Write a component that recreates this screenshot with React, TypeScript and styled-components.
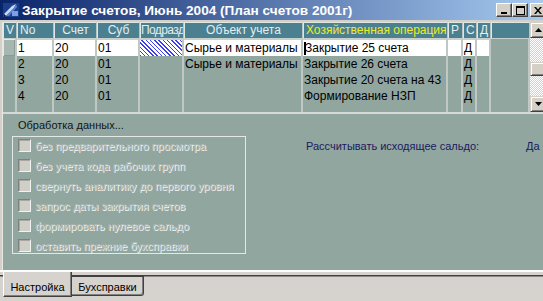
import React from "react";
import styled, { createGlobalStyle, css } from "styled-components";

const Global = createGlobalStyle`
  html, body { margin: 0; padding: 0; background: #d4d0c8; overflow: hidden; }
  body { font-family: "Liberation Sans", Arial, sans-serif; }
`;

const Window = styled.div`
  width: 543px;
  height: 301px;
  display: flex;
  flex-direction: column;
  overflow: hidden;
  background: #d4d0c8;
`;

const TitleBar = styled.div`
  height: 20px;
  flex: none;
  display: flex;
  align-items: center;
  padding-left: 3px;
  overflow: hidden;
  background: linear-gradient(90deg, #0a246a 0%, #a6caf0 100%);
`;

const Title = styled.div`
  flex: 1;
  min-width: 0;
  margin-left: 3px;
  color: #fff;
  font-weight: bold;
  font-size: 13.6px;
  white-space: nowrap;
`;

const TitleButtons = styled.div`
  flex: none;
  display: flex;
  margin-right: -3px;
`;

const TitleButton = styled.div<{ $gap?: boolean }>`
  width: 16px;
  height: 14px;
  box-sizing: border-box;
  margin-left: ${(p) => (p.$gap ? "2px" : "0")};
  background: #d4d0c8;
  border: 1px solid;
  border-color: #fff #404040 #404040 #fff;
  box-shadow: inset -1px -1px #808080;
  display: flex;
  align-items: center;
  justify-content: center;
`;

const Body = styled.div`
  flex: none;
  margin: 2px 0 0 2px;
  display: flex;
  flex-direction: column;
  overflow: hidden;
  background: #91a69f;
  border-left: 1px solid #e6e9e6;
`;

const GridArea = styled.div`
  height: 90px;
  display: flex;
  flex: none;
`;

const Table = styled.div`
  flex: none;
  width: 527px;
  display: grid;
  grid-template-columns: 14px 37px 43px 43px 44px 119px 145px 15px 14px 14px 39px;
  grid-template-rows: 17px 17px 16px 16px 16px 1fr;
  overflow: hidden;
`;

const HeadCell = styled.div<{ $align?: string; $yellow?: boolean; $narrow?: boolean }>`
  background: #4b8091;
  color: ${(p) => (p.$yellow ? "#ecec28" : "#e4eef0")};
  font-size: 12px;
  line-height: 15px;
  letter-spacing: ${(p) => (p.$narrow ? "-0.6px" : "0")};
  white-space: nowrap;
  overflow: hidden;
  text-align: ${(p) => p.$align || "left"};
  padding: 0 ${(p) => (p.$narrow ? "0" : "2px")};
  border-top: 1px solid #dfe7e5;
  border-left: 1px solid #dfe7e5;
  border-right: 1px solid #b9c3bf;
  border-bottom: 1px solid #c8d0cc;
`;

const BodyCell = styled.div<{ $kind?: string }>`
  font-size: 12px;
  line-height: 16px;
  color: #000;
  white-space: nowrap;
  overflow: hidden;
  padding-left: 1px;
  border-right: 2px solid #bfc8c4;
  display: flex;
  align-items: center;
  ${(p) =>
    p.$kind === "white" &&
    css`
      background: #fff;
      border-top: 1px solid #c8d0cc;
    `}
  ${(p) =>
    p.$kind === "v" &&
    css`
      background: #a6b6b0;
      box-shadow: inset 1px 1px #e4e9e7, inset -1px -1px #8a9a94;
    `}
  ${(p) =>
    p.$kind === "hatch" &&
    css`
      border-top: 1px solid #c8d0cc;
      background: repeating-linear-gradient(45deg, #3c3cf0 0 1px, #ffffff 1px 3px);
    `}
`;

const Caret = styled.span`
  display: inline-block;
  width: 2px;
  height: 13px;
  background: #000;
  margin-right: -1px;
`;

const ScrollBar = styled.div`
  flex: none;
  width: 16px;
  display: flex;
  flex-direction: column;
  background-color: #fff;
  background-image: conic-gradient(#d4d0c8 25%, #fff 0 50%, #d4d0c8 0 75%, #fff 0);
  background-size: 2px 2px;
`;

const ScrollBtn = styled.div`
  width: 16px;
  height: 16px;
  box-sizing: border-box;
  flex: none;
  background: #d4d0c8;
  border: 1px solid;
  border-color: #d4d0c8 #404040 #404040 #d4d0c8;
  box-shadow: inset 1px 1px #fff, inset -1px -1px #808080;
  display: flex;
  align-items: center;
  justify-content: center;
`;

const Track = styled.div<{ $h: number }>`
  height: ${(p) => p.$h}px;
  flex: none;
`;

const Thumb = styled(ScrollBtn)`
  height: 14px;
`;

const Panel = styled.div`
  height: 158px;
  box-sizing: border-box;
  border-top: 2px solid #d5dad7;
  display: flex;
  flex: none;
`;

const LeftCol = styled.div`
  flex: none;
  width: 303px;
  padding-left: 9px;
  box-sizing: border-box;
`;

const GroupTitle = styled.div`
  font-size: 11px;
  line-height: 13px;
  color: #141414;
  padding: 5px 0 0 6px;
`;

const GroupBox = styled.div`
  margin-top: 4px;
  width: 234px;
  height: 118px;
  box-sizing: border-box;
  border: 1px solid #e4e9e7;
  padding-left: 5px;
`;

const OptionRow = styled.div`
  height: 20px;
  box-sizing: border-box;
  padding-bottom: 3px;
  display: flex;
  align-items: center;
`;

const Check = styled.div`
  width: 13px;
  height: 13px;
  box-sizing: border-box;
  flex: none;
  background: #cfcfc8;
  border: 1px solid;
  border-color: #808080 #f2f2f2 #f2f2f2 #808080;
  box-shadow: inset 1px 1px #a8a8a0;
`;

const OptionLabel = styled.span`
  margin-left: 4px;
  font-size: 11px;
  color: #adb7b4;
  text-shadow: 1px 1px 0 #f2f4f2;
  white-space: nowrap;
`;

const RightCol = styled.div`
  flex: 1;
  padding-top: 26px;
  display: flex;
  align-items: flex-start;
  font-size: 11px;
  line-height: 13px;
  color: #1a1a5e;
  white-space: nowrap;
`;

const SettingName = styled.span`
  width: 220px;
  flex: none;
`;

const TabStrip = styled.div`
  flex: 1;
  display: flex;
  align-items: flex-start;
  padding-left: 3px;
  border-top: 2px solid #fdfdfd;
  background-color: #d6d2ce;
  background-image: linear-gradient(
    to bottom,
    transparent 3px,
    #404040 3px,
    #404040 4px,
    #8a8a8a 4px,
    #8a8a8a 5px,
    transparent 5px
  );
`;

const Tab = styled.div<{ $active?: boolean }>`
  font-size: 11px;
  color: #000;
  box-sizing: border-box;
  display: flex;
  justify-content: center;
  white-space: nowrap;
  ${(p) =>
    p.$active
      ? css`
          width: 69px;
          height: 25px;
          padding-top: 9px;
          background: #d6d2ce;
          border-left: 1px solid #fff;
          border-right: 1px solid #404040;
          border-bottom: 1px solid #404040;
          box-shadow: inset -1px -1px #808080;
        `
      : css`
          width: 72px;
          height: 20px;
          margin-top: 4px;
          padding-top: 4px;
          border: 1px solid #404040;
          border-left: none;
          border-radius: 0 0 3px 0;
          box-shadow: inset -1px -1px #808080;
        `}
`;

type Col = { key: string; head: string; align?: string; yellow?: boolean; narrow?: boolean };

const columns: Col[] = [
  { key: "v", head: "V" },
  { key: "no", head: "No" },
  { key: "schet", head: "Счет", align: "center" },
  { key: "sub", head: "Суб", align: "center" },
  { key: "pod", head: "Подразд", narrow: true },
  { key: "obj", head: "Объект учета", align: "center" },
  { key: "op", head: "Хозяйственная операция", align: "center", yellow: true },
  { key: "r", head: "Р" },
  { key: "c", head: "С" },
  { key: "d", head: "Д" },
  { key: "x", head: "" },
];

type Row = Record<string, string> & { sel?: boolean };

const rows: Row[] = [
  { v: "", no: "1", schet: "20", sub: "01", pod: "", obj: "Сырье и материалы", op: "Закрытие 25 счета", r: "", c: "Д", d: "", x: "", sel: true } as Row,
  { v: "", no: "2", schet: "20", sub: "01", pod: "", obj: "Сырье и материалы", op: "Закрытие 26 счета", r: "", c: "Д", d: "", x: "" } as Row,
  { v: "", no: "3", schet: "20", sub: "01", pod: "", obj: "", op: "Закрытие 20 счета на 43", r: "", c: "Д", d: "", x: "" } as Row,
  { v: "", no: "4", schet: "20", sub: "01", pod: "", obj: "", op: "Формирование НЗП", r: "", c: "Д", d: "", x: "" } as Row,
];

const options = [
  "без предварительного просмотра",
  "без учета кода рабочих групп",
  "свернуть аналитику до первого уровня",
  "запрос даты закрытия счетов",
  "формировать нулевое сальдо",
  "оставить прежние бухсправки",
];

function kindFor(key: string, sel?: boolean): string | undefined {
  if (!sel) return undefined;
  if (key === "v") return "v";
  if (key === "pod") return "hatch";
  if (key === "x") return undefined;
  return "white";
}

const AppIcon = () => (
  <svg width="16" height="16" viewBox="0 0 16 16">
    <rect x="0" y="1" width="16" height="14" fill="#1c3f8c" />
    <path d="M1 12 L9 4 L13 2 L11 6 L3 14 Z" fill="#c8d8f8" />
    <path d="M3 14 L11 6 L13 2 L14 5 L6 14 Z" fill="#5a7fd0" />
    <path d="M1 12 L3 14 L1 15 Z" fill="#0a1a50" />
    <rect x="9" y="9" width="6" height="5" fill="#7fa0e0" />
  </svg>
);

const MinGlyph = () => (
  <svg width="8" height="7" viewBox="0 0 8 7">
    <rect x="1" y="5" width="6" height="2" fill="#000" />
  </svg>
);
const MaxGlyph = () => (
  <svg width="9" height="9" viewBox="0 0 9 9">
    <rect x="0.5" y="0.5" width="8" height="8" fill="none" stroke="#000" />
    <rect x="0" y="0" width="9" height="2" fill="#000" />
  </svg>
);
const CloseGlyph = () => (
  <svg width="8" height="7" viewBox="0 0 8 7">
    <path d="M0 0 L2 0 L4 2.5 L6 0 L8 0 L5 3.5 L8 7 L6 7 L4 4.5 L2 7 L0 7 L3 3.5 Z" fill="#000" />
  </svg>
);
const Arrow = ({ up }: { up?: boolean }) => (
  <svg width="7" height="4" viewBox="0 0 7 4">
    <path d={up ? "M3.5 0 L7 4 L0 4 Z" : "M0 0 L7 0 L3.5 4 Z"} fill="#000" />
  </svg>
);

export default function App() {
  return (
    <>
      <Global />
      <Window>
        <TitleBar>
          <AppIcon />
          <Title>Закрытие счетов, Июнь 2004 (План счетов 2001г)</Title>
          <TitleButtons>
            <TitleButton>
              <MinGlyph />
            </TitleButton>
            <TitleButton>
              <MaxGlyph />
            </TitleButton>
            <TitleButton $gap>
              <CloseGlyph />
            </TitleButton>
          </TitleButtons>
        </TitleBar>
        <Body>
          <GridArea>
            <Table>
              {columns.map((c) => (
                <HeadCell key={c.key} $align={c.align} $yellow={c.yellow} $narrow={c.narrow}>
                  {c.head}
                </HeadCell>
              ))}
              {rows.map((r, i) =>
                columns.map((c) => (
                  <BodyCell key={`${i}-${c.key}`} $kind={kindFor(c.key, r.sel)}>
                    {r.sel && c.key === "op" ? <Caret /> : null}
                    {r[c.key]}
                  </BodyCell>
                ))
              )}
              {columns.map((c) => (
                <BodyCell key={`f-${c.key}`} />
              ))}
            </Table>
            <ScrollBar>
              <ScrollBtn>
                <Arrow up />
              </ScrollBtn>
              <Track $h={24} />
              <Thumb />
              <Track $h={20} />
              <ScrollBtn>
                <Arrow />
              </ScrollBtn>
            </ScrollBar>
          </GridArea>
          <Panel>
            <LeftCol>
              <GroupTitle>Обработка данных...</GroupTitle>
              <GroupBox>
                {options.map((o) => (
                  <OptionRow key={o}>
                    <Check />
                    <OptionLabel>{o}</OptionLabel>
                  </OptionRow>
                ))}
              </GroupBox>
            </LeftCol>
            <RightCol>
              <SettingName>Рассчитывать исходящее сальдо:</SettingName>
              <span>Да</span>
            </RightCol>
          </Panel>
        </Body>
        <TabStrip>
          <Tab $active>Настройка</Tab>
          <Tab>Бухсправки</Tab>
        </TabStrip>
      </Window>
    </>
  );
}
